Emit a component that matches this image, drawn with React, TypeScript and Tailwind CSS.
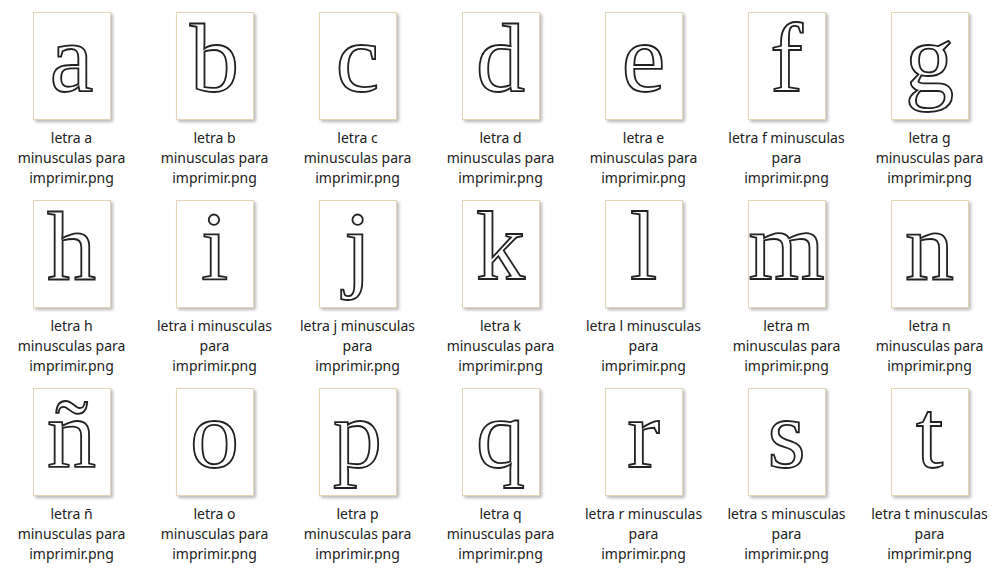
const files: { letter: string; lines: string[] }[] = [
  { letter: 'a', lines: ['letra a', 'minusculas para', 'imprimir.png'] },
  { letter: 'b', lines: ['letra b', 'minusculas para', 'imprimir.png'] },
  { letter: 'c', lines: ['letra c', 'minusculas para', 'imprimir.png'] },
  { letter: 'd', lines: ['letra d', 'minusculas para', 'imprimir.png'] },
  { letter: 'e', lines: ['letra e', 'minusculas para', 'imprimir.png'] },
  { letter: 'f', lines: ['letra f minusculas', 'para', 'imprimir.png'] },
  { letter: 'g', lines: ['letra g', 'minusculas para', 'imprimir.png'] },
  { letter: 'h', lines: ['letra h', 'minusculas para', 'imprimir.png'] },
  { letter: 'i', lines: ['letra i minusculas', 'para', 'imprimir.png'] },
  { letter: 'j', lines: ['letra j minusculas', 'para', 'imprimir.png'] },
  { letter: 'k', lines: ['letra k', 'minusculas para', 'imprimir.png'] },
  { letter: 'l', lines: ['letra l minusculas', 'para', 'imprimir.png'] },
  { letter: 'm', lines: ['letra m', 'minusculas para', 'imprimir.png'] },
  { letter: 'n', lines: ['letra n', 'minusculas para', 'imprimir.png'] },
  { letter: 'ñ', lines: ['letra ñ', 'minusculas para', 'imprimir.png'] },
  { letter: 'o', lines: ['letra o', 'minusculas para', 'imprimir.png'] },
  { letter: 'p', lines: ['letra p', 'minusculas para', 'imprimir.png'] },
  { letter: 'q', lines: ['letra q', 'minusculas para', 'imprimir.png'] },
  { letter: 'r', lines: ['letra r minusculas', 'para', 'imprimir.png'] },
  { letter: 's', lines: ['letra s minusculas', 'para', 'imprimir.png'] },
  { letter: 't', lines: ['letra t minusculas', 'para', 'imprimir.png'] },
];

function Thumb({ letter }: { letter: string }) {
  return (
    <div className="w-[78px] h-[108px] bg-white border border-[#e3d6b6] shadow-[2px_2px_3px_rgba(0,0,0,0.28)] flex items-start justify-center">
      <span className="text-[98px] leading-[90px] text-white font-['Liberation_Serif',serif] [-webkit-text-stroke:1.8px_#222]">
        {letter}
      </span>
    </div>
  );
}

export default function App() {
  return (
    <div className="w-[1004px] h-[568px] bg-white overflow-hidden">
      <div className="grid grid-cols-[repeat(7,143px)] grid-rows-[repeat(3,188px)]">
        {files.map((f) => (
          <div key={f.letter} className="flex flex-col items-center pt-3">
            <Thumb letter={f.letter} />
            <div className="mt-2 text-center text-[14px] leading-5 text-[#222] font-['Noto_Sans',sans-serif]">
              {f.lines.map((l, i) => (
                <div key={i}>{l}</div>
              ))}
            </div>
          </div>
        ))}
      </div>
    </div>
  );
}
